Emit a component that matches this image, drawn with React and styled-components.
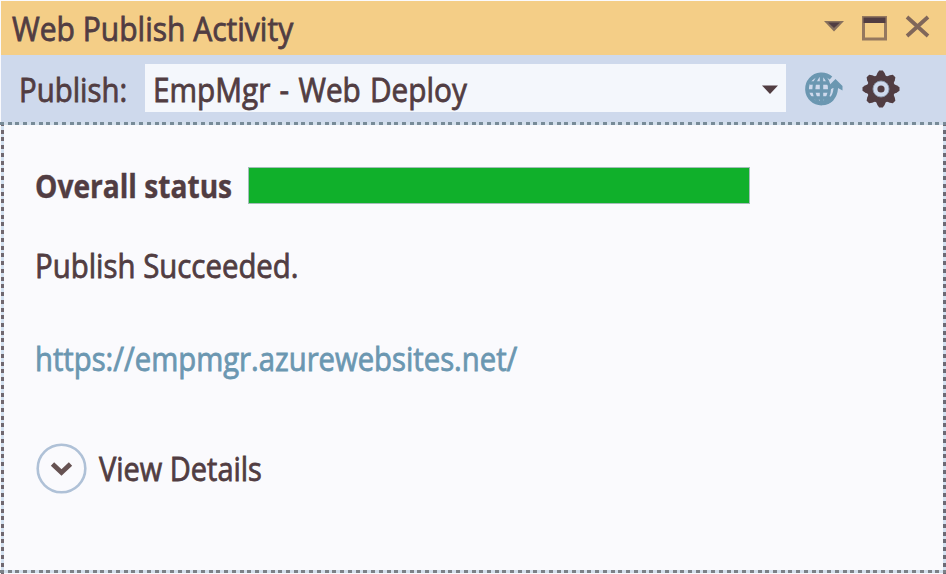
import React from "react";
import styled, { createGlobalStyle } from "styled-components";

const ink = "#513d42";
const blue = "#6b97b1";

const GlobalStyle = createGlobalStyle`
  * { box-sizing: border-box; }
  body { margin: 0; background: #fafafd; }
`;

const Panel = styled.main`
  display: flex;
  flex-direction: column;
  width: 946px;
  height: 574px;
  overflow: hidden;
  background: #fafafd;
  color: ${ink};
  font-family: "Open Sans", "Noto Sans", sans-serif;
  font-size: 32px;
  line-height: 44px;
`;

const Label = styled.span`
  display: block;
  white-space: nowrap;
  font-weight: ${(p) => (p.$bold ? 700 : 400)};
  word-spacing: ${(p) => p.$wordGap || 0}px;
  transform: scaleX(${(p) => p.$condense});
  transform-origin: left center;
  -webkit-text-stroke: ${(p) => (p.$bold ? "0.4px" : "0.8px")} currentColor;
`;

const TitleBar = styled.header`
  display: flex;
  align-items: flex-start;
  justify-content: space-between;
  flex: none;
  height: 55px;
  border-top: 1px solid #fafafd;
  margin-left: 1px;
  padding: 6px 16px 0 10.5px;
  background: #f4ce87;
`;

const WindowButtons = styled.div`
  display: flex;
  align-items: flex-start;
  gap: 18px;
  height: 26px;
  margin-top: 9px;
`;

const Glyph = styled.svg`
  display: block;
  flex: none;
  overflow: visible;
`;

const Toolbar = styled.div`
  display: flex;
  align-items: flex-start;
  flex: none;
  height: 67px;
  margin-left: 1px;
  padding: 9px 0 0 18px;
  background: #ced9ec;
`;

const ToolbarLabel = styled.div`
  width: 126px;
  padding-top: 4px;
`;

const Select = styled.div`
  display: flex;
  align-items: flex-start;
  justify-content: space-between;
  width: 641px;
  height: 48px;
  padding: 4px 8px 0 8px;
  background: #f4f7fc;
`;

const SelectArrow = styled(Glyph)`
  margin-top: 17px;
`;

const ToolbarActions = styled.div`
  display: flex;
  align-items: center;
  gap: 19px;
  height: 49px;
  margin-left: 19px;
`;

const Content = styled.section`
  display: flex;
  flex-direction: column;
  flex: 1;
  padding: 42px 0 0 34.5px;
  background:
    repeating-linear-gradient(90deg, #788b98 0 4px, #d3dfec 4px 7.73px) 0 0 / 100% 3px no-repeat,
    repeating-linear-gradient(90deg, #7c8187 0 4px, #d3dfec 4px 7.73px) 0 calc(100% - 1px) / 100% 3px no-repeat,
    repeating-linear-gradient(180deg, #706870 0 4px, #d3e1f0 4px 7.73px) 1px 0 / 3px 100% no-repeat,
    repeating-linear-gradient(180deg, #6b6a75 0 4px, #d3e1f0 4px 7.73px) 100% 0 / 3px 100% no-repeat;
`;

const StatusRow = styled.div`
  display: flex;
  align-items: flex-start;
  height: 44px;
`;

const StatusLabel = styled.div`
  width: 213.5px;
`;

const Progress = styled.div`
  width: 502px;
  height: 37px;
  margin-top: 3px;
  border: 1px solid #a4bdb9;
  background: #10b02b;
`;

const Message = styled.div`
  margin-top: 36px;
`;

const SiteLink = styled.a`
  display: block;
  margin-top: 49px;
  color: ${blue};
  text-decoration: none;
`;

const Details = styled.div`
  display: flex;
  align-items: center;
  gap: 12px;
  height: 52px;
  margin: 61px 0 0 1.5px;
`;

const DetailsText = styled.div`
  padding-top: 2px;
`;

const teeth = [0, 45, 90, 135, 180, 225, 270, 315];

const GlobeIcon = () => (
  <Glyph width="38" height="34" viewBox="0 0 38 34" fill="none" stroke={blue}>
    <path d="M26 6A14.5 14.5 0 1 0 27 27" strokeWidth="3.8" />
    <path d="M16.5 2v30M5 11h19M2 19h22M6 26h19" strokeWidth="3.4" />
    <path d="M14.5 3C7 11 7 23 14.5 31M18 3c5 5 6.5 9 6.5 14S22 27 18 31" strokeWidth="3" />
    <path d="M26 7.5h12V17H26z" fill="#ced9ec" stroke="none" />
    <path d="M21 30c7-2 10-7 10-18" strokeWidth="4.6" />
    <path d="M30.5 7 37.5 14v4.5L33 16h-5l-4.5 2.5V14z" fill={blue} stroke="none" />
  </Glyph>
);

const GearIcon = () => (
  <Glyph width="38" height="38" viewBox="-19 -19 38 38">
    {teeth.map((a) => (
      <path key={a} d="M-6-10-3.6-16-1.8-18.5H1.8L3.6-16 6-10Z" fill={ink} transform={`rotate(${a})`} />
    ))}
    <circle r="14" fill={ink} />
    <circle r="8" fill="#ced9ec" stroke="#8c9bae" strokeWidth="0.9" />
    <circle r="3.6" fill={ink} />
  </Glyph>
);

export default function App() {
  return (
    <>
      <GlobalStyle />
      <Panel>
        <TitleBar>
          <Label $condense={0.938}>Web Publish Activity</Label>
          <WindowButtons>
            <Glyph width="20" height="24" viewBox="0 0 20 24">
              <path d="M0 5h20L10 15.5z" fill="#87705d" />
              <path d="M4 6.5h12L10 12z" fill={ink} />
            </Glyph>
            <Glyph width="25" height="25" viewBox="0 0 25 25">
              <path d="M1.5 1.5h22v21.5h-22z" fill="none" stroke="#94785f" strokeWidth="3" />
              <path d="M1.5 1.5h22v5.5h-22z" fill={ink} />
            </Glyph>
            <Glyph width="25" height="23" viewBox="0 0 25 23">
              <path d="M2 1 23 20M23 1 2 20" fill="none" stroke="#80675a" strokeWidth="3.8" />
            </Glyph>
          </WindowButtons>
        </TitleBar>
        <Toolbar>
          <ToolbarLabel>
            <Label $condense={0.918}>Publish:</Label>
          </ToolbarLabel>
          <Select>
            <Label $condense={0.93} $wordGap={1.6}>EmpMgr - Web Deploy</Label>
            <SelectArrow width="16" height="10" viewBox="0 0 16 10">
              <path d="M0 0.5h16L8 9z" fill={ink} />
            </SelectArrow>
          </Select>
          <ToolbarActions>
            <GlobeIcon />
            <GearIcon />
          </ToolbarActions>
        </Toolbar>
        <Content>
          <StatusRow>
            <StatusLabel>
              <Label $bold $condense={0.879}>Overall status</Label>
            </StatusLabel>
            <Progress />
          </StatusRow>
          <Message>
            <Label $condense={0.918}>Publish Succeeded.</Label>
          </Message>
          <SiteLink>
            <Label $condense={0.914}>https://empmgr.azurewebsites.net/</Label>
          </SiteLink>
          <Details>
            <Glyph width="51" height="51" viewBox="0 0 51 51" fill="none">
              <circle cx="25.5" cy="25.5" r="23.8" stroke="#afc1d7" strokeWidth="2.6" />
              <path d="M16.5 21 25.5 29.5 34.5 21" stroke="#665252" strokeWidth="4.8" />
            </Glyph>
            <DetailsText>
              <Label $condense={0.905}>View Details</Label>
            </DetailsText>
          </Details>
        </Content>
      </Panel>
    </>
  );
}
